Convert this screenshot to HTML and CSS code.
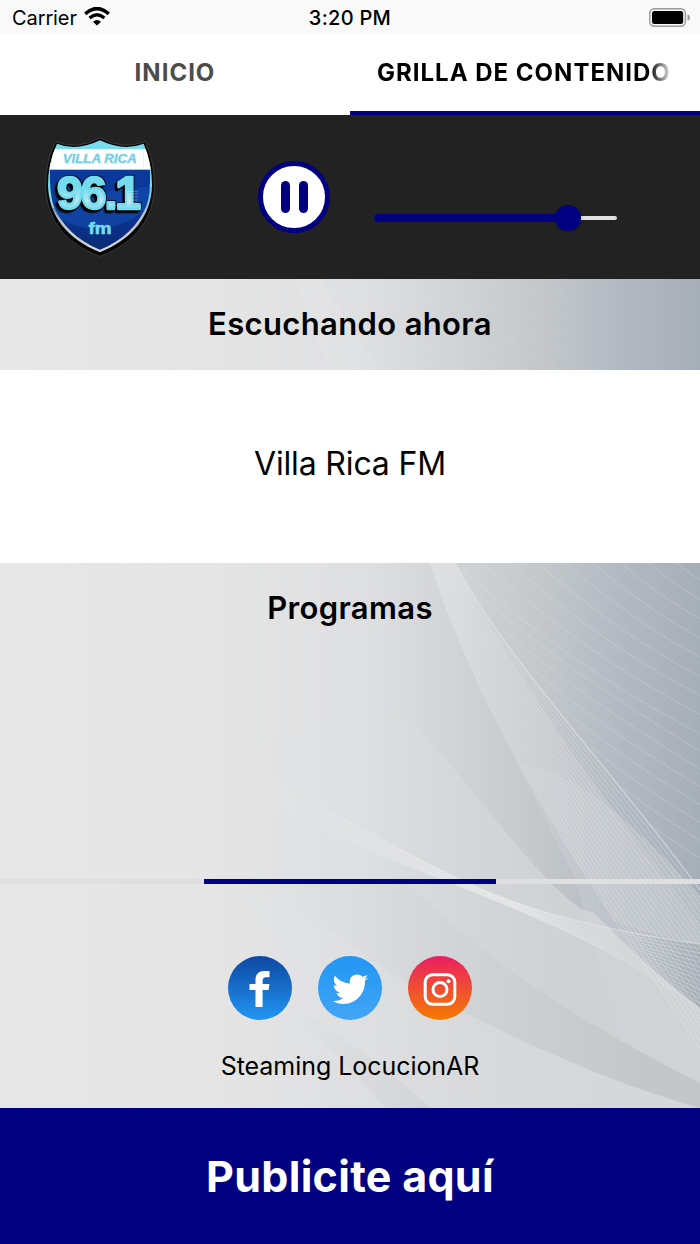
FILE: index.html
```
<!DOCTYPE html>
<html lang="es">
<head>
    <meta charset="UTF-8">
    <meta name="viewport" content="width=device-width, initial-scale=1.0">
    <title>Villa Rica FM</title>
    <link rel="stylesheet" href="styles.css">
</head>
<body>
    <header class="status-bar">
        <div class="carrier">
            <span>Carrier</span>
            <svg class="wifi" viewBox="0 0 26 19">
                <path d="M1.3 6.8Q13-3.6 24.7 6.8" fill="none" stroke="#000" stroke-width="3.7"/>
                <path d="M5.6 10.9Q13 4.6 20.4 10.9" fill="none" stroke="#000" stroke-width="3.3"/>
                <path d="M9 14.8Q13 11.4 17 14.8L13 18.6Z"/>
            </svg>
        </div>
        <span class="clock">3:20 PM</span>
        <svg class="battery" viewBox="0 0 42 20">
            <rect x=".8" y=".8" width="35.6" height="17.4" rx="4.5" fill="none" stroke="#999" stroke-width="1.4"/>
            <rect x="3" y="3" width="31.2" height="13" rx="2.5"/>
            <path d="M38.5 6.3Q41 7 41 9.5T38.5 12.7Z" fill="#999"/>
        </svg>
    </header>

    <nav class="tabs">
        <a class="tab">INICIO</a>
        <a class="tab active"><span class="tab-text">GRILLA DE CONTENIDO</span></a>
    </nav>

    <section class="player">
        <svg class="logo" viewBox="0 0 420 435">
            <defs>
                <linearGradient id="shieldBlue" x1="0" y1="0" x2="0" y2="1">
                    <stop offset="0" stop-color="#0a3a9c"/>
                    <stop offset=".5" stop-color="#0c3796"/>
                    <stop offset="1" stop-color="#0a2a74"/>
                </linearGradient>
                <linearGradient id="rim" x1="0" y1="0" x2="0" y2="1">
                    <stop offset=".5" stop-color="#78dcef"/>
                    <stop offset=".64" stop-color="#b8c0c8"/>
                    <stop offset="1" stop-color="#d8d8d8"/>
                </linearGradient>
                <linearGradient id="digits" x1="0" y1="0" x2="0" y2="1">
                    <stop offset=".4" stop-color="#74dbee"/>
                    <stop offset=".65" stop-color="#b9e8f2"/>
                    <stop offset=".85" stop-color="#6fd3e8"/>
                </linearGradient>
                <clipPath id="shieldClip">
                    <path d="M81 56Q140 80 210 46Q280 80 341 56Q366 116 366 180C364 272 310 340 210 382C110 340 56 272 54 180Q54 116 81 56Z"/>
                </clipPath>
            </defs>
            <path d="M76 50Q142 76 210 39Q278 76 346 50Q373 110 373 182C371 280 318 354 210 394C102 354 49 280 47 182Q47 110 76 50Z" fill="#070707" stroke="#5c5c5c" stroke-width="1.5"/>
            <path d="M81 56Q140 80 210 46Q280 80 341 56Q366 116 366 180C364 272 310 340 210 382C110 340 56 272 54 180Q54 116 81 56Z" fill="url(#rim)"/>
            <g clip-path="url(#shieldClip)">
                <path d="M64 72H341V134H64Z" fill="#fff"/>
                <path d="M341 72H366V134H341ZM64 72H54V134H64Z" fill="#fff"/>
                <path d="M60 134H360Q362 200 350 240C326 300 280 346 210 374C140 346 94 300 70 240Q58 200 60 134Z" fill="url(#shieldBlue)"/>
                <path d="M66 250Q200 190 361 185Q360 230 340 262Q210 350 90 282Z" fill="#1550b5" opacity=".5"/>
            </g>
            <text class="logo-name" x="209" y="114" text-anchor="middle" textLength="222" lengthAdjust="spacingAndGlyphs">VILLA RICA</text>
            <text class="logo-freq" x="204" y="251" text-anchor="middle" textLength="246" lengthAdjust="spacingAndGlyphs">96.1</text>
            <g stroke="#fff" stroke-width="2" opacity=".4">
                <path d="M165 226H182M205 222H226M288 199H324M288 207H324M288 216H324M250 241H268M288 225H324M288 234H324"/>
            </g>
            <text class="logo-fm" x="210" y="327" text-anchor="middle" textLength="69" lengthAdjust="spacingAndGlyphs">fm</text>
        </svg>
        <button class="pause" aria-label="Pausa"><i></i><i></i></button>
        <div class="volume">
            <div class="volume-fill" style="width: 80%"><span class="volume-thumb"></span></div>
        </div>
    </section>

    <section class="now-title">
        <svg class="waves" viewBox="0 0 700 545" preserveAspectRatio="none"></svg>
        <h2>Escuchando ahora</h2>
    </section>
    <section class="now">Villa Rica FM</section>

    <main class="programs">
        <svg class="waves filled" viewBox="0 0 700 545" preserveAspectRatio="none"></svg>
        <h2>Programas</h2>
        <div class="loader"><div class="loader-bar"></div></div>
        <div class="social">
            <a class="facebook">
                <svg viewBox="0 0 64 64"><path d="M27.5 51V34H21.5V28H27.5V24C27.5 18 31 15 36 15H41.5V21.2H38C35.5 21.2 34.6 22.6 34.6 25V28H41.5L40.5 34H34.6V51Z" fill="#fff"/></svg>
            </a>
            <a class="twitter">
                <svg viewBox="0 0 64 64"><path d="M50.5 22.1L47 24.6C47.5 37 38.5 48 25.5 48C21.5 48 18 46.9 14.8 45C19 45.3 22.3 44.2 25.2 42.1C21.8 41.8 19.5 39.8 18.5 36.9C19.7 37.1 20.8 37 21.8 36.7C18.2 35.6 15.9 32.7 15.8 29.1C17 29.7 18 30 19.2 30C15.9 27.5 15 23.2 16.9 19.8C21 24.5 25.8 27.1 32 27.4C30.8 22.4 34.4 18.6 38.9 18.6C41.1 18.6 43 19.4 44.4 20.8C46.2 20.4 47.9 19.8 49.3 19C48.7 20.8 47.6 22.1 46.2 23C47.7 22.9 49.2 22.6 50.5 22.1Z" fill="#fff"/></svg>
            </a>
            <a class="instagram">
                <svg viewBox="0 0 64 64" fill="none" stroke="#fff">
                    <rect x="17.2" y="18.7" width="29.6" height="29.6" rx="7.5" stroke-width="3"/>
                    <circle cx="32" cy="33.5" r="7" stroke-width="3"/>
                    <circle cx="40.5" cy="25.2" r="2" fill="#fff" stroke="none"/>
                </svg>
            </a>
        </div>
        <p class="credit">Steaming LocucionAR</p>
    </main>

    <footer class="ad">Publicite aquí</footer>

    <script src="waves.js"></script>
</body>
</html>
```
FILE: styles.css
```
* {
    box-sizing: border-box;
}
body {
    margin: 0;
    width: 700px;
    height: 1244px;
    display: flex;
    flex-direction: column;
    overflow: hidden;
    background: #fff;
    color: #000;
    font-family: Inter, "Liberation Sans", sans-serif;
}
h2 {
    margin: 0;
    position: relative;
    font-size: 31px;
    font-weight: 600;
    letter-spacing: 0.35px;
    line-height: 38px;
    text-align: center;
}

/* status bar */
.status-bar {
    height: 34px;
    padding: 1px 9px 0 12px;
    display: grid;
    grid-template-columns: 1fr auto 1fr;
    align-items: center;
    background: #f9f9f9;
    font-size: 20px;
}
.carrier {
    display: flex;
    align-items: center;
    gap: 7px;
    letter-spacing: -0.1px;
}
.wifi {
    width: 26px;
    height: 19px;
    margin-top: -2px;
}
.clock {
    font-weight: 500;
    letter-spacing: 0.3px;
    margin-right: 3px;
}
.battery {
    width: 42px;
    height: 20px;
    justify-self: end;
}

/* tabs */
.tabs {
    height: 81px;
    display: flex;
    background: #fff;
}
.tab {
    flex: 1;
    min-width: 0;
    padding: 0 27px 4px;
    display: flex;
    align-items: center;
    justify-content: center;
    color: #4c4c4c;
    font-size: 24px;
    font-weight: 650;
    letter-spacing: 1px;
    border-bottom: 0 solid #000080;
}
.tab.active {
    color: #000;
    padding-bottom: 0;
    border-bottom-width: 4px;
    justify-content: flex-start;
}
.tab-text {
    white-space: nowrap;
    -webkit-mask-image: linear-gradient(to right, #000 272px, transparent 296px);
    mask-image: linear-gradient(to right, #000 272px, transparent 296px);
}

/* player */
.player {
    height: 164px;
    display: flex;
    align-items: center;
    padding-left: 30px;
    background: #222;
}
.logo {
    width: 140px;
    height: 145px;
}
.logo-name {
    font: italic bold 36px "Liberation Sans", sans-serif;
    fill: #74cfe4;
    stroke: #74cfe4;
}
.logo-freq {
    font: bold 136px "Liberation Sans", sans-serif;
    fill: url(#digits);
    stroke: #74dbee;
    stroke-width: 7;
    letter-spacing: -6px;
    stroke-linejoin: round;
    filter: drop-shadow(-4px 4px 0 #000) drop-shadow(-3px 4px 0 #000) drop-shadow(2px -2px 0 #000);
}
.logo-fm {
    font: bold 51px "Liberation Sans", sans-serif;
    fill: #74dbee;
    stroke: #74dbee;
    stroke-width: 2;
}
.pause {
    width: 72px;
    height: 72px;
    margin-left: 88px;
    padding: 0;
    display: flex;
    align-items: center;
    justify-content: center;
    gap: 9px;
    background: #fff;
    border: 5px solid #000080;
    border-radius: 50%;
}
.pause i {
    width: 9px;
    height: 32px;
    border-radius: 5px;
    background: #000080;
}
.volume {
    width: 243px;
    height: 4px;
    margin: 42px 0 0 44px;
    display: flex;
    align-items: center;
    background: #e3e0e0;
    border-radius: 2px;
}
.volume-fill {
    height: 8px;
    display: flex;
    align-items: center;
    justify-content: flex-end;
    background: #000080;
    border-radius: 4px;
}
.volume-thumb {
    flex: none;
    width: 26px;
    height: 26px;
    margin-right: -13px;
    border-radius: 50%;
    background: #000080;
    box-shadow: 0 1px 3px rgba(0, 0, 0, 0.3);
}

/* decorated panels */
.now-title,
.programs {
    position: relative;
    overflow: hidden;
    background: linear-gradient(to right, #e7e7e7 0%, #e5e5e5 30%, #dedfe1 52%, #d0d3d6 66%, #c4c8cb 77%, #b2b9c2 89%, #a6aeb8 100%);
}
.waves {
    position: absolute;
    left: 0;
    top: 0;
    width: 100%;
    height: 100%;
}
.now-title {
    height: 91px;
    padding-top: 26px;
}
.now-title .waves {
    height: 545px;
    left: -135px;
    opacity: 0.6;
}
.now {
    height: 193px;
    padding-bottom: 6px;
    display: flex;
    align-items: center;
    justify-content: center;
    font-size: 32px;
    letter-spacing: -0.15px;
}
.programs {
    height: 545px;
    padding-top: 26px;
    display: flex;
    flex-direction: column;
}
.programs h2 {
    height: 290px;
}
.loader {
    position: relative;
    height: 5px;
    background: #dfdfdf;
}
.loader-bar {
    width: 292px;
    height: 5px;
    margin-left: 204px;
    background: #000080;
}
.social {
    position: relative;
    margin-top: 72px;
    display: flex;
    justify-content: center;
    gap: 26px;
}
.social a {
    width: 64px;
    height: 64px;
    border-radius: 50%;
}
.social svg {
    display: block;
}
.facebook {
    background: linear-gradient(#0d47a1, #2196f3);
}
.twitter {
    background: linear-gradient(#2196f3, #42a5f5);
}
.instagram {
    background: linear-gradient(#e91e63, #f57c00);
}
.credit {
    position: relative;
    margin: 30px 0 0;
    font-size: 25px;
    letter-spacing: -0.05px;
    line-height: 32px;
    text-align: center;
}

.ad {
    flex: 1;
    display: flex;
    align-items: center;
    justify-content: center;
    background: #000080;
    color: #fff;
    font-size: 43px;
    font-weight: 700;
    letter-spacing: 0.3px;
}
```
FILE: waves.js
```
const NS = 'http://www.w3.org/2000/svg';

// each curve is a cubic: start, two handles, end
const meshes = [
    { a: [455, 0, 510, 105, 630, 225, 725, 362], b: [430, 0, 495, 190, 590, 320, 720, 515], n: 22, o: 0.32 },
    { a: [240, 202, 455, 310, 480, 350, 700, 381], b: [240, 225, 410, 320, 530, 330, 700, 445], n: 14, o: 0.32 },
    { a: [700, -4, 701, -3, 702, -2, 703, 0], b: [460, 5, 540, 75, 620, 130, 703, 172], n: 9, o: 0.22 },
    { a: [477, 30, 550, 95, 630, 145, 703, 190], b: [650, 262, 668, 275, 685, 286, 703, 297], n: 6, o: 0.22 }
];

const fills = [
    // left half of the panel up to the main crest
    { d: 'M430 0C495 190 590 320 700 485V362Q530 145 455 0Z', x: [430, 700], c: ['#dcdee0', '#bcc2c8'], o: [0.3, 0.7] },
    { d: 'M517 200Q560 205 610 245T725 362V545H640L575 316Z', x: [517, 700], c: ['#d8dadc', '#bfc5cb'], o: [0.2, 0.7] },
    { d: 'M380 125Q430 175 500 262T594 350Q640 395 700 445V545H237L200 210Z', x: [230, 700], c: ['#e2e3e4', '#d0d3d6'], o: [0, 1] },
    { d: 'M594 350Q650 374 700 381V445Q645 404 594 350Z', x: [590, 700], c: ['#c2c7cb', '#a3abb4'], o: [0.3, 0.9] },
    // long dark folds
    { d: 'M237 320Q310 350 384 406T550 490Q630 525 700 545V520Q620 480 550 435T402 315Z', x: [240, 640], c: ['#dcddde', '#c3c7ca'], o: [0, 1] },
    { d: 'M384 406Q460 450 550 490T700 545H380L237 320Z', x: [240, 700], c: ['#e2e3e4', '#d6d7d9'], o: [0.3, 0.8] },
    { d: 'M260 425Q355 475 430 545H385Q330 480 260 425Z', x: [260, 430], c: ['#dcddde', '#cfd2d5'], o: [0, 0.8] }
];

function add(parent, tag, attrs) {
    const el = document.createElementNS(NS, tag);
    for (const key in attrs) el.setAttribute(key, attrs[key]);
    parent.appendChild(el);
    return el;
}

function curve(p) {
    return `M${p[0]} ${p[1]}C${p.slice(2).join(' ')}`;
}

document.querySelectorAll('.waves').forEach((svg, s) => {
    if (svg.classList.contains('filled')) {
        fills.forEach((f, i) => {
            const id = `fill_${i}`;
            const grad = add(svg, 'linearGradient', { id, gradientUnits: 'userSpaceOnUse', x1: f.x[0], x2: f.x[1], y1: 0, y2: 0 });
            add(grad, 'stop', { offset: 0, 'stop-color': f.c[0], 'stop-opacity': f.o[0] });
            add(grad, 'stop', { offset: 1, 'stop-color': f.c[1], 'stop-opacity': f.o[1] });
            add(svg, 'path', { d: f.d, fill: `url(#${id})` });
        });
    }

    const id = `line_${s}`;
    const fade = add(svg, 'linearGradient', { id, gradientUnits: 'userSpaceOnUse', x1: 240, x2: 440, y1: 0, y2: 0 });
    add(fade, 'stop', { offset: 0, 'stop-color': '#f2f2f2', 'stop-opacity': 0 });
    add(fade, 'stop', { offset: 1, 'stop-color': '#f2f2f2' });

    // thin lines blended between the two edges of each mesh
    meshes.forEach((m, k) => {
        for (let i = 0; i <= m.n; i++) {
            const t = i / m.n;
            const p = m.a.map((v, j) => +(v + (m.b[j] - v) * t).toFixed(1));
            const edge = i === 0 && k < 2;
            add(svg, 'path', { d: curve(p), fill: 'none', stroke: `url(#${id})`, 'stroke-width': edge ? 1.5 : 1, opacity: edge ? m.o + 0.1 : m.o });
        }
    });
});
```
